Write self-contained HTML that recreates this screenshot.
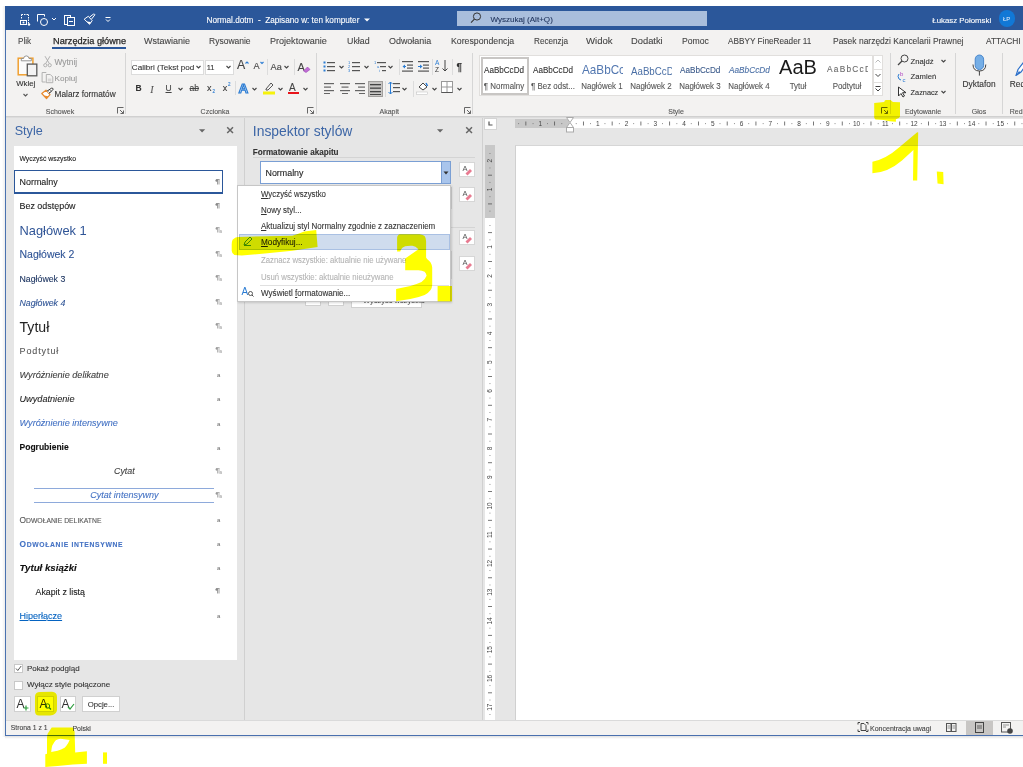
<!DOCTYPE html>
<html><head><meta charset="utf-8"><style>
html,body{margin:0;padding:0;width:1023px;height:767px;overflow:hidden;background:#fff}
body{position:relative;font-family:"Liberation Sans",sans-serif}
.r{position:absolute;display:block}
.t{position:absolute;white-space:nowrap;font-family:"Liberation Sans",sans-serif;-webkit-text-stroke:0.1px currentColor}
.fit{display:inline-block;white-space:nowrap}
</style></head><body>
<div class="r" style="left:0px;top:0px;width:1023px;height:767px;background:#fff"></div>
<div class="r" style="left:5px;top:6px;width:1018px;height:730px;background:#f3f2f1;border-left:1px solid #4a72b0;box-sizing:border-box"></div>
<div class="r" style="left:5px;top:6px;width:1018px;height:24px;background:#2b579a"></div>
<svg class="r" style="left:17px;top:12px;" width="16" height="16" viewBox="0 0 16 16"><path d="M4.5 2.5h7M4.5 2.5v5M11.5 2.5v9" stroke="#fff" stroke-width="1" stroke-dasharray="1.5 1" fill="none"/><rect x="3.5" y="8.5" width="6" height="4" stroke="#fff" fill="none"/><circle cx="6.5" cy="10.5" r="1" fill="#fff"/><circle cx="12" cy="12.5" r="1.2" fill="#fff"/></svg>
<svg class="r" style="left:35px;top:12px;" width="16" height="16" viewBox="0 0 16 16"><path d="M2.5 9.5v-7h7v2" stroke="#fff" fill="none"/><circle cx="9" cy="10" r="3.5" stroke="#fff" fill="none"/></svg>
<svg class="r" style="left:50px;top:15px;" width="8" height="8" viewBox="0 0 8 8"><path d="M2 3l2 2 2-2" stroke="#fff" fill="none"/></svg>
<svg class="r" style="left:62px;top:12px;" width="16" height="16" viewBox="0 0 16 16"><rect x="2.5" y="3.5" width="6" height="9" stroke="#fff" fill="none"/><rect x="5.5" y="5.5" width="7" height="8" stroke="#fff" fill="#2b579a"/><path d="M7 9.5h4" stroke="#fff"/></svg>
<svg class="r" style="left:82px;top:12px;" width="16" height="16" viewBox="0 0 16 16"><path d="M2.2 7.2L6.3 4.3L10.2 8.6L7.6 12.3Z" stroke="#fff" stroke-width="1" fill="none" stroke-linejoin="round"/><path d="M4.5 9.5L7.6 12.3L9 10Z" fill="#fff"/><path d="M7.5 5.2L11.3 2.2Q12.5 1.6 12.9 2.8L9.6 7" stroke="#fff" stroke-width="1" fill="none"/></svg>
<svg class="r" style="left:104px;top:15px;" width="8" height="8" viewBox="0 0 8 8"><path d="M1.5 2.5h5" stroke="#fff"/><path d="M2 4.5l2 2 2-2" stroke="#fff" fill="none"/></svg>
<div class="t" style="left:206.5px;top:15.67px;font-size:8.2px;line-height:10.66px;color:#fff;">Normal.dotm&nbsp; - &nbsp;Zapisano w: ten komputer</div>
<svg class="r" style="left:363px;top:17px;" width="8" height="6" viewBox="0 0 8 6"><path d="M1 1.5h6l-3 3z" fill="#fff"/></svg>
<div class="r" style="left:457px;top:10.8px;width:250px;height:15.6px;background:#a9bedc"></div>
<svg class="r" style="left:469px;top:11px;" width="14" height="14" viewBox="0 0 14 14"><circle cx="8" cy="5.5" r="3.6" stroke="#333" fill="none" stroke-width="1"/><path d="M5.4 8.2L2 11.6" stroke="#333" stroke-width="1.1"/></svg>
<div class="t" style="left:490.4px;top:15.05px;font-size:8.07px;line-height:10.49px;color:#22365e;">Wyszukaj (Alt+Q)</div>
<div class="t" style="left:932.3px;top:15.50px;font-size:7.85px;line-height:10.21px;color:#fff;">Łukasz Połomski</div>
<div class="r" style="left:998.5px;top:10.2px;width:16.5px;height:16.5px;background:#1178d6;border-radius:50%"></div>
<div class="t" style="left:906.70px;width:200px;text-align:center;top:16.10px;font-size:6px;line-height:7.8px;color:#e8f0fa;-webkit-text-stroke:0">ŁP</div>
<div class="t" style="left:18px;top:35.42px;font-size:9.5px;line-height:12.35px;color:#444;;transform:scaleX(0.8494);transform-origin:0 50%">Plik</div>
<div class="t" style="left:52.5px;top:35.42px;font-size:9.5px;line-height:12.35px;color:#262626;-webkit-text-stroke:0.25px currentColor;transform:scaleX(0.9667);transform-origin:0 50%">Narzędzia główne</div>
<div class="t" style="left:143.9px;top:35.42px;font-size:9.5px;line-height:12.35px;color:#444;;transform:scaleX(0.947);transform-origin:0 50%">Wstawianie</div>
<div class="t" style="left:209px;top:35.42px;font-size:9.5px;line-height:12.35px;color:#444;;transform:scaleX(0.8953);transform-origin:0 50%">Rysowanie</div>
<div class="t" style="left:270.2px;top:35.42px;font-size:9.5px;line-height:12.35px;color:#444;;transform:scaleX(0.9519);transform-origin:0 50%">Projektowanie</div>
<div class="t" style="left:346.7px;top:35.42px;font-size:9.5px;line-height:12.35px;color:#444;;transform:scaleX(0.9304);transform-origin:0 50%">Układ</div>
<div class="t" style="left:388.5px;top:35.42px;font-size:9.5px;line-height:12.35px;color:#444;;transform:scaleX(0.9401);transform-origin:0 50%">Odwołania</div>
<div class="t" style="left:450.6px;top:35.42px;font-size:9.5px;line-height:12.35px;color:#444;;transform:scaleX(0.9204);transform-origin:0 50%">Korespondencja</div>
<div class="t" style="left:534px;top:35.42px;font-size:9.5px;line-height:12.35px;color:#444;;transform:scaleX(0.8585);transform-origin:0 50%">Recenzja</div>
<div class="t" style="left:586.2px;top:35.42px;font-size:9.5px;line-height:12.35px;color:#444;;transform:scaleX(1.0079);transform-origin:0 50%">Widok</div>
<div class="t" style="left:631px;top:35.42px;font-size:9.5px;line-height:12.35px;color:#444;;transform:scaleX(0.984);transform-origin:0 50%">Dodatki</div>
<div class="t" style="left:681.6px;top:35.42px;font-size:9.5px;line-height:12.35px;color:#444;;transform:scaleX(0.9099);transform-origin:0 50%">Pomoc</div>
<div class="t" style="left:727.8px;top:35.42px;font-size:9.5px;line-height:12.35px;color:#444;;transform:scaleX(0.8651);transform-origin:0 50%">ABBYY FineReader 11</div>
<div class="t" style="left:833.2px;top:35.42px;font-size:9.5px;line-height:12.35px;color:#444;;transform:scaleX(0.8922);transform-origin:0 50%">Pasek narzędzi Kancelarii Prawnej</div>
<div class="t" style="left:985.8px;top:35.42px;font-size:9.5px;line-height:12.35px;color:#444;;transform:scaleX(0.8844);transform-origin:0 50%">ATTACHI</div>
<div class="r" style="left:52px;top:47px;width:74px;height:2px;background:#2b579a"></div>
<div class="r" style="left:6px;top:50px;width:1017px;height:66px;background:#f3f2f1"></div>
<div class="r" style="left:6px;top:116px;width:1017px;height:1.2px;background:#d0d0d0"></div>
<div class="r" style="left:6px;top:117.2px;width:1017px;height:1px;background:#dcdcdc"></div>
<div class="r" style="left:125px;top:53px;width:1px;height:61px;background:#d6d6d6"></div>
<div class="r" style="left:316px;top:53px;width:1px;height:61px;background:#d6d6d6"></div>
<div class="r" style="left:472px;top:53px;width:1px;height:61px;background:#d6d6d6"></div>
<div class="r" style="left:890px;top:53px;width:1px;height:61px;background:#d6d6d6"></div>
<div class="r" style="left:955px;top:53px;width:1px;height:61px;background:#d6d6d6"></div>
<div class="r" style="left:1002px;top:53px;width:1px;height:61px;background:#d6d6d6"></div>
<svg class="r" style="left:16px;top:54px;" width="24" height="24" viewBox="0 0 24 24"><rect x="2.2" y="4.2" width="14.7" height="16.6" fill="#fbfbfb" stroke="#f0a030" stroke-width="1.5"/><path d="M5.3 6.8v-2.3h2.3q0.2-2.6 2.7-2.6q2.5 0 2.7 2.6h2.3v2.3z" fill="#fff" stroke="#8a8a8a" stroke-width="0.9"/><rect x="11.3" y="10.1" width="9.5" height="11.7" fill="#f3f3f3" stroke="#5a5a5a" stroke-width="1.3"/></svg>
<div class="t" style="left:16.2px;top:79.05px;font-size:7.77px;line-height:10.1px;color:#333;">Wklej</div>
<svg class="r" style="left:22px;top:91.5px;" width="7" height="6" viewBox="0 0 7 6"><path d="M1.5 2l2 2 2-2" stroke="#555" stroke-width="1.1" fill="none"/></svg>
<svg class="r" style="left:42px;top:55px;" width="11" height="13" viewBox="0 0 11 13"><path d="M3 1.2l4.3 7.3M8 1.2L3.7 8.5" stroke="#aaa" fill="none" stroke-width="0.9"/><circle cx="3.3" cy="10.2" r="1.6" stroke="#aaa" fill="none" stroke-width="0.9"/><circle cx="7.7" cy="10.2" r="1.6" stroke="#aaa" fill="none" stroke-width="0.9"/></svg>
<div class="t" style="left:54.6px;top:57.41px;font-size:8.3px;line-height:10.79px;color:#999;">Wytnij</div>
<svg class="r" style="left:41px;top:71px;" width="13" height="13" viewBox="0 0 13 13"><path d="M5.3 1.5h-4.2v9.5h3.5" stroke="#aaa" fill="none" stroke-width="0.9"/><path d="M5.3 3.5h4l2.5 2.5v5.7h-6.5z" stroke="#aaa" fill="#f3f2f1" stroke-width="0.9"/><path d="M6.8 8.2h3.5M6.8 9.8h3.5" stroke="#bbb" stroke-width="0.7"/></svg>
<div class="t" style="left:54.6px;top:73.73px;font-size:8.1px;line-height:10.53px;color:#999;">Kopiuj</div>
<svg class="r" style="left:41px;top:87px;" width="13" height="13" viewBox="0 0 13 13"><path d="M0.8 6.5L5 3.2L9 7.6L5.5 11.6Z" stroke="#e8892c" stroke-width="1.2" fill="#fff" stroke-linejoin="round"/><path d="M3 8.6L5.5 11.6L7.3 9.2Z" fill="#e8892c"/><path d="M6 4.2L10.5 1.2Q12 0.8 12.2 2.2L8.2 6.5" stroke="#333" stroke-width="1" fill="#fff"/><path d="M7.5 4.5l1.5 1.5M9 3.2l1.3 1.3" stroke="#333" stroke-width="0.7"/></svg>
<div class="t" style="left:54.6px;top:90.12px;font-size:8.28px;line-height:10.76px;color:#333;">Malarz formatów</div>
<div class="t" style="left:-40.00px;width:200px;text-align:center;top:106.85px;font-size:7px;line-height:9.1px;color:#555;">Schowek</div>
<svg class="r" style="left:117px;top:107px;" width="8" height="8" viewBox="0 0 8 8"><path d="M0.5 6.5v-6h6" stroke="#666" fill="none"/><path d="M3 3l3.5 3.5M3.5 6.5h3v-3" stroke="#666" fill="none"/></svg>
<div class="r" style="left:130.5px;top:59.5px;width:73px;height:15px;background:#fff;border:1px solid #dcdcdc;box-sizing:border-box"></div>
<div class="t" style="left:131.8px;top:62.53px;font-size:8.1px;line-height:10.53px;color:#333;"><span class="fit" style="width:62.6px">Calibri (Tekst pod</span></div>
<svg class="r" style="left:195px;top:64px;" width="7" height="6" viewBox="0 0 7 6"><path d="M1.5 2l2 2 2-2" stroke="#444" stroke-width="1.1" fill="none"/></svg>
<div class="r" style="left:205px;top:59.5px;width:29px;height:15px;background:#fff;border:1px solid #dcdcdc;box-sizing:border-box"></div>
<div class="t" style="left:206.7px;top:62.92px;font-size:7.5px;line-height:9.75px;color:#333;">11</div>
<svg class="r" style="left:225px;top:64px;" width="7" height="6" viewBox="0 0 7 6"><path d="M1.5 2l2 2 2-2" stroke="#444" stroke-width="1.1" fill="none"/></svg>
<div class="t" style="left:236.9px;top:58.01px;font-size:12.3px;line-height:15.99px;color:#444;">A</div>
<svg class="r" style="left:244.5px;top:60.5px;" width="4" height="4" viewBox="0 0 4 4"><path d="M0.5 2.5l1.5-1.5 1.5 1.5" stroke="#2b7cd3" stroke-width="1.1" fill="none"/></svg>
<div class="t" style="left:253.5px;top:61.22px;font-size:9.2px;line-height:11.96px;color:#444;">A</div>
<svg class="r" style="left:259.8px;top:60.5px;" width="4" height="4" viewBox="0 0 4 4"><path d="M0.5 1l1.5 1.5 1.5-1.5" stroke="#2b7cd3" stroke-width="1.1" fill="none"/></svg>
<div class="r" style="left:266.5px;top:59px;width:1px;height:16px;background:#dcdcdc"></div>
<div class="t" style="left:270.6px;top:61.82px;font-size:9.2px;line-height:11.96px;color:#444;">Aa</div>
<svg class="r" style="left:283px;top:64px;" width="7" height="6" viewBox="0 0 7 6"><path d="M1.5 2l2 2 2-2" stroke="#444" stroke-width="1.1" fill="none"/></svg>
<div class="r" style="left:294px;top:59px;width:1px;height:16px;background:#dcdcdc"></div>
<div class="t" style="left:297.5px;top:60.15px;font-size:11px;line-height:14.3px;color:#444;">A</div>
<svg class="r" style="left:302px;top:66px;" width="9" height="7" viewBox="0 0 9 7"><path d="M1.5 5l4-4 2.5 2.5-4 3z" fill="#c16fd6" stroke="#9b3fb5" stroke-width="0.6"/></svg>
<div class="t" style="left:135.5px;top:83.47px;font-size:8.5px;line-height:11.05px;color:#333;"><b>B</b></div>
<div class="t" style="left:150.3px;top:82.50px;font-size:10px;line-height:13.0px;color:#555;font-family:Liberation Serif"><i>I</i></div>
<div class="t" style="left:165.5px;top:83.27px;font-size:8.5px;line-height:11.05px;color:#444;"><u>U</u></div>
<svg class="r" style="left:177px;top:86px;" width="7" height="6" viewBox="0 0 7 6"><path d="M1.5 2l2 2 2-2" stroke="#444" stroke-width="1.1" fill="none"/></svg>
<div class="t" style="left:189.5px;top:83.27px;font-size:8.5px;line-height:11.05px;color:#444;"><s>ab</s></div>
<div class="t" style="left:207px;top:83.45px;font-size:9px;line-height:11.7px;color:#333;">x</div>
<div class="t" style="left:212.5px;top:89.38px;font-size:4.5px;line-height:5.85px;color:#2b7cd3;">2</div>
<div class="t" style="left:222.8px;top:83.45px;font-size:9px;line-height:11.7px;color:#333;">x</div>
<div class="t" style="left:228px;top:81.88px;font-size:4.5px;line-height:5.85px;color:#2b7cd3;">2</div>
<div class="r" style="left:234.5px;top:81px;width:1px;height:14px;background:#dcdcdc"></div>
<div class="t" style="left:238.4px;top:80.02px;font-size:13.5px;line-height:17.55px;color:#d6e6f8;-webkit-text-stroke:1.1px #2b7cd3"><b>A</b></div>
<svg class="r" style="left:251px;top:86px;" width="7" height="6" viewBox="0 0 7 6"><path d="M1.5 2l2 2 2-2" stroke="#444" stroke-width="1.1" fill="none"/></svg>
<svg class="r" style="left:262px;top:80px;" width="14" height="15" viewBox="0 0 14 15"><path d="M4 9l5-6 2 2-5 5h-2z" stroke="#555" fill="none"/><rect x="1" y="11.5" width="12" height="3" fill="#f6f20b"/></svg>
<svg class="r" style="left:277px;top:86px;" width="7" height="6" viewBox="0 0 7 6"><path d="M1.5 2l2 2 2-2" stroke="#444" stroke-width="1.1" fill="none"/></svg>
<div class="t" style="left:289px;top:80.80px;font-size:10px;line-height:13.0px;color:#444;">A</div>
<div class="r" style="left:288px;top:91.5px;width:11px;height:2.5px;background:#e8141a"></div>
<svg class="r" style="left:302px;top:86px;" width="7" height="6" viewBox="0 0 7 6"><path d="M1.5 2l2 2 2-2" stroke="#444" stroke-width="1.1" fill="none"/></svg>
<div class="t" style="left:115.00px;width:200px;text-align:center;top:106.85px;font-size:7px;line-height:9.1px;color:#555;">Czcionka</div>
<svg class="r" style="left:307px;top:107px;" width="8" height="8" viewBox="0 0 8 8"><path d="M0.5 6.5v-6h6" stroke="#666" fill="none"/><path d="M3 3l3.5 3.5M3.5 6.5h3v-3" stroke="#666" fill="none"/></svg>
<svg class="r" style="left:323px;top:60px;" width="12" height="12" viewBox="0 0 12 12"><rect x="0.5" y="1.5" width="2" height="2" fill="#2b7cd3"/><rect x="0.5" y="5.5" width="2" height="2" fill="#2b7cd3"/><rect x="0.5" y="9.5" width="2" height="2" fill="#2b7cd3"/><rect x="4" y="2" width="8" height="1.2" fill="#555"/><rect x="4" y="6" width="8" height="1.2" fill="#555"/><rect x="4" y="10" width="8" height="1.2" fill="#555"/></svg>
<svg class="r" style="left:338px;top:64px;" width="7" height="6" viewBox="0 0 7 6"><path d="M1.5 2l2 2 2-2" stroke="#444" stroke-width="1.1" fill="none"/></svg>
<svg class="r" style="left:348px;top:60px;" width="12" height="12" viewBox="0 0 12 12"><text x="0" y="4" font-size="4" fill="#2b7cd3" font-family="Liberation Sans">1</text><text x="0" y="8" font-size="4" fill="#2b7cd3" font-family="Liberation Sans">2</text><text x="0" y="12" font-size="4" fill="#2b7cd3" font-family="Liberation Sans">3</text><rect x="4" y="2" width="8" height="1.2" fill="#555"/><rect x="4" y="6" width="8" height="1.2" fill="#555"/><rect x="4" y="10" width="8" height="1.2" fill="#555"/></svg>
<svg class="r" style="left:363px;top:64px;" width="7" height="6" viewBox="0 0 7 6"><path d="M1.5 2l2 2 2-2" stroke="#444" stroke-width="1.1" fill="none"/></svg>
<svg class="r" style="left:374px;top:60px;" width="12" height="12" viewBox="0 0 12 12"><text x="0" y="4" font-size="4" fill="#2b7cd3" font-family="Liberation Sans">1</text><text x="3" y="8" font-size="4" fill="#2b7cd3" font-family="Liberation Sans">a</text><text x="5" y="12" font-size="4" fill="#2b7cd3" font-family="Liberation Sans">i</text><rect x="3" y="2" width="9" height="1.2" fill="#555"/><rect x="6" y="6" width="6" height="1.2" fill="#555"/><rect x="8" y="10" width="4" height="1.2" fill="#555"/></svg>
<svg class="r" style="left:387px;top:64px;" width="7" height="6" viewBox="0 0 7 6"><path d="M1.5 2l2 2 2-2" stroke="#444" stroke-width="1.1" fill="none"/></svg>
<div class="r" style="left:398.5px;top:59px;width:1px;height:16px;background:#dcdcdc"></div>
<svg class="r" style="left:402px;top:60px;" width="11" height="12" viewBox="0 0 11 12"><rect x="0" y="1" width="11" height="1.2" fill="#555"/><rect x="5" y="4.5" width="6" height="1.2" fill="#555"/><rect x="5" y="7.5" width="6" height="1.2" fill="#555"/><rect x="0" y="10.5" width="11" height="1.2" fill="#555"/><path d="M0.5 6.5l2.5-2v4z" fill="#2b7cd3"/><rect x="1" y="6" width="3" height="1" fill="#2b7cd3"/></svg>
<svg class="r" style="left:418px;top:60px;" width="11" height="12" viewBox="0 0 11 12"><rect x="0" y="1" width="11" height="1.2" fill="#555"/><rect x="5" y="4.5" width="6" height="1.2" fill="#555"/><rect x="5" y="7.5" width="6" height="1.2" fill="#555"/><rect x="0" y="10.5" width="11" height="1.2" fill="#555"/><path d="M4.5 6.5l-2.5-2v4z" fill="#2b7cd3"/><rect x="0" y="6" width="3" height="1" fill="#2b7cd3"/></svg>
<div class="r" style="left:432px;top:59px;width:1px;height:16px;background:#dcdcdc"></div>
<svg class="r" style="left:435px;top:59px;" width="14" height="14" viewBox="0 0 14 14"><text x="0" y="6" font-size="6.5" fill="#2b7cd3" font-family="Liberation Sans">A</text><text x="0" y="13" font-size="6.5" fill="#333" font-family="Liberation Sans">Z</text><path d="M10 1v11M7.5 9.5l2.5 2.5 2.5-2.5" stroke="#444" fill="none"/></svg>
<div class="r" style="left:451.5px;top:59px;width:1px;height:16px;background:#dcdcdc"></div>
<div class="t" style="left:456.5px;top:60.80px;font-size:10px;line-height:13.0px;color:#333;font-weight:bold">¶</div>
<svg class="r" style="left:324px;top:82px;" width="11" height="12" viewBox="0 0 11 12"><rect x="0" y="1" width="10" height="1.2" fill="#666"/><rect x="0" y="4.5" width="7" height="1.2" fill="#666"/><rect x="0" y="8" width="10" height="1.2" fill="#666"/><rect x="0" y="11" width="6" height="1.2" fill="#666"/></svg>
<svg class="r" style="left:340px;top:82px;" width="11" height="12" viewBox="0 0 11 12"><rect x="0" y="1" width="10" height="1.2" fill="#666"/><rect x="1.5" y="4.5" width="7" height="1.2" fill="#666"/><rect x="0" y="8" width="10" height="1.2" fill="#666"/><rect x="2" y="11" width="6" height="1.2" fill="#666"/></svg>
<svg class="r" style="left:355px;top:82px;" width="11" height="12" viewBox="0 0 11 12"><rect x="0" y="1" width="10" height="1.2" fill="#666"/><rect x="3" y="4.5" width="7" height="1.2" fill="#666"/><rect x="0" y="8" width="10" height="1.2" fill="#666"/><rect x="4" y="11" width="6" height="1.2" fill="#666"/></svg>
<div class="r" style="left:368px;top:81px;width:15px;height:16px;background:#c8c6c4;border:1px solid #a19f9d;box-sizing:border-box"></div>
<svg class="r" style="left:370px;top:83px;" width="11" height="12" viewBox="0 0 11 12"><rect x="0" y="1" width="11" height="1.3" fill="#444"/><rect x="0" y="4.5" width="11" height="1.3" fill="#444"/><rect x="0" y="8" width="11" height="1.3" fill="#444"/><rect x="0" y="11" width="11" height="1.3" fill="#444"/></svg>
<div class="r" style="left:384.5px;top:81px;width:1px;height:16px;background:#dcdcdc"></div>
<svg class="r" style="left:388px;top:81px;" width="13" height="14" viewBox="0 0 13 14"><path d="M2.5 1v12M0.5 3l2-2 2 2M0.5 11l2 2 2-2" stroke="#2b7cd3" fill="none"/><rect x="5" y="2" width="7" height="1.2" fill="#555"/><rect x="5" y="6" width="7" height="1.2" fill="#555"/><rect x="5" y="10" width="7" height="1.2" fill="#555"/></svg>
<svg class="r" style="left:401px;top:86px;" width="7" height="6" viewBox="0 0 7 6"><path d="M1.5 2l2 2 2-2" stroke="#444" stroke-width="1.1" fill="none"/></svg>
<div class="r" style="left:412.5px;top:81px;width:1px;height:16px;background:#dcdcdc"></div>
<svg class="r" style="left:416px;top:80px;" width="13" height="15" viewBox="0 0 13 15"><path d="M3 7l4-4 4 4-4 3z" stroke="#444" fill="#fff"/><path d="M10 3l1.5 3" stroke="#2b7cd3" stroke-width="1.5"/><rect x="0.5" y="12" width="11" height="2.5" fill="#fff" stroke="#bbb" stroke-width="0.5"/></svg>
<svg class="r" style="left:431px;top:86px;" width="7" height="6" viewBox="0 0 7 6"><path d="M1.5 2l2 2 2-2" stroke="#444" stroke-width="1.1" fill="none"/></svg>
<svg class="r" style="left:441px;top:81px;" width="12" height="13" viewBox="0 0 12 13"><rect x="0.5" y="0.5" width="11" height="11" stroke="#999" fill="#fff"/><path d="M6 0.5v11M0.5 6h11" stroke="#999"/><path d="M0.5 11.5h11" stroke="#555"/></svg>
<svg class="r" style="left:456px;top:86px;" width="7" height="6" viewBox="0 0 7 6"><path d="M1.5 2l2 2 2-2" stroke="#444" stroke-width="1.1" fill="none"/></svg>
<div class="t" style="left:289.30px;width:200px;text-align:center;top:106.85px;font-size:7px;line-height:9.1px;color:#555;">Akapit</div>
<svg class="r" style="left:464px;top:107px;" width="8" height="8" viewBox="0 0 8 8"><path d="M0.5 6.5v-6h6" stroke="#666" fill="none"/><path d="M3 3l3.5 3.5M3.5 6.5h3v-3" stroke="#666" fill="none"/></svg>
<div class="r" style="left:479px;top:54.5px;width:394px;height:41px;background:#fff;border:1px solid #e1dfdd;box-sizing:border-box"></div>
<div class="r" style="left:480.5px;top:56.5px;width:48px;height:38px;border:2px solid #c8c6c4;box-sizing:border-box"></div>
<div class="r" style="left:482px;top:56px;width:44px;height:26px;overflow:hidden"><div class="t" style="left:2px;top:8.61px;font-size:8.9px;line-height:11.57px;color:#333;transform:scaleX(0.91);transform-origin:0 50%">AaBbCcDd</div></div>
<div class="t" style="left:474.00px;width:60px;text-align:center;top:81.18px;font-size:8.8px;line-height:11.44px;color:#555;;transform:scaleX(0.9);transform-origin:50% 50%">¶ Normalny</div>
<div class="r" style="left:531px;top:56px;width:44px;height:26px;overflow:hidden"><div class="t" style="left:2px;top:8.61px;font-size:8.9px;line-height:11.57px;color:#333;transform:scaleX(0.91);transform-origin:0 50%">AaBbCcDd</div></div>
<div class="t" style="left:523.00px;width:60px;text-align:center;top:81.18px;font-size:8.8px;line-height:11.44px;color:#555;;transform:scaleX(0.9);transform-origin:50% 50%">¶ Bez odst...</div>
<div class="r" style="left:580px;top:56px;width:43px;height:26px;overflow:hidden"><div class="t" style="left:2px;top:5.87px;font-size:12.6px;line-height:16.38px;color:#5277b0;-webkit-text-stroke:0;transform:scaleX(0.93);transform-origin:0 50%">AaBbCcDd</div></div>
<div class="t" style="left:572.00px;width:60px;text-align:center;top:81.18px;font-size:8.8px;line-height:11.44px;color:#555;;transform:scaleX(0.9);transform-origin:50% 50%">Nagłówek 1</div>
<div class="r" style="left:629px;top:56px;width:43px;height:26px;overflow:hidden"><div class="t" style="left:2px;top:7.69px;font-size:10.8px;line-height:14.04px;color:#4a6fa5;-webkit-text-stroke:0;transform:scaleX(0.9);transform-origin:0 50%">AaBbCcDd</div></div>
<div class="t" style="left:621.00px;width:60px;text-align:center;top:81.18px;font-size:8.8px;line-height:11.44px;color:#555;;transform:scaleX(0.9);transform-origin:50% 50%">Nagłówek 2</div>
<div class="r" style="left:678px;top:56px;width:43px;height:26px;overflow:hidden"><div class="t" style="left:2px;top:8.61px;font-size:8.9px;line-height:11.57px;color:#3b5a8a;transform:scaleX(0.92);transform-origin:0 50%">AaBbCcDd</div></div>
<div class="t" style="left:670.00px;width:60px;text-align:center;top:81.18px;font-size:8.8px;line-height:11.44px;color:#555;;transform:scaleX(0.9);transform-origin:50% 50%">Nagłówek 3</div>
<div class="r" style="left:727px;top:56px;width:43px;height:26px;overflow:hidden"><div class="t" style="left:2px;top:8.61px;font-size:8.9px;line-height:11.57px;color:#4a6fa5;font-style:italic;transform:scaleX(0.93);transform-origin:0 50%">AaBbCcDd</div></div>
<div class="t" style="left:719.00px;width:60px;text-align:center;top:81.18px;font-size:8.8px;line-height:11.44px;color:#555;;transform:scaleX(0.9);transform-origin:50% 50%">Nagłówek 4</div>
<div class="r" style="left:776px;top:56px;width:44px;height:26px;overflow:hidden"><div class="t" style="left:0;width:44px;text-align:center;top:-1.60px;font-size:20px;line-height:26.00px;color:#1a1a1a;-webkit-text-stroke:0">AaB</div></div>
<div class="t" style="left:768.00px;width:60px;text-align:center;top:81.18px;font-size:8.8px;line-height:11.44px;color:#555;;transform:scaleX(0.9);transform-origin:50% 50%">Tytuł</div>
<div class="r" style="left:825px;top:56px;width:43px;height:26px;overflow:hidden"><div class="t" style="left:2px;top:9.22px;font-size:8.3px;line-height:10.79px;color:#6a6a6a;letter-spacing:1.25px;margin-top:-1.3px">AaBbCcD</div></div>
<div class="t" style="left:817.00px;width:60px;text-align:center;top:81.18px;font-size:8.8px;line-height:11.44px;color:#555;;transform:scaleX(0.9);transform-origin:50% 50%">Podtytuł</div>
<div class="r" style="left:873px;top:54.5px;width:10px;height:41px;background:#fff;border:1px solid #e1dfdd;box-sizing:border-box"></div>
<div class="r" style="left:873px;top:69px;width:10px;height:1px;background:#e1dfdd"></div>
<div class="r" style="left:873px;top:82px;width:10px;height:1px;background:#e1dfdd"></div>
<svg class="r" style="left:875px;top:59px;" width="6" height="5" viewBox="0 0 6 5"><path d="M0.5 3.5l2.5-2.5 2.5 2.5" stroke="#bbb" fill="none"/></svg>
<svg class="r" style="left:875px;top:73px;" width="6" height="5" viewBox="0 0 6 5"><path d="M0.5 1l2.5 2.5 2.5-2.5" stroke="#444" fill="none"/></svg>
<svg class="r" style="left:875px;top:86px;" width="6" height="6" viewBox="0 0 6 6"><path d="M0.5 0.5h5M0.5 2.5l2.5 2.5 2.5-2.5" stroke="#444" fill="none"/></svg>
<div class="t" style="left:576.00px;width:200px;text-align:center;top:106.85px;font-size:7px;line-height:9.1px;color:#555;">Style</div>
<svg class="r" style="left:881px;top:107px;" width="8" height="8" viewBox="0 0 8 8"><path d="M0.5 6.5v-6h6" stroke="#666" fill="none"/><path d="M3 3l3.5 3.5M3.5 6.5h3v-3" stroke="#666" fill="none"/></svg>
<svg class="r" style="left:897px;top:54px;" width="12" height="12" viewBox="0 0 12 12"><circle cx="7.5" cy="4.5" r="3.5" stroke="#444" fill="none"/><path d="M5 7L1 11" stroke="#444" stroke-width="1.2"/></svg>
<div class="t" style="left:910.6px;top:56.62px;font-size:7.66px;line-height:9.96px;color:#333;">Znajdź</div>
<svg class="r" style="left:940px;top:58px;" width="7" height="6" viewBox="0 0 7 6"><path d="M1.5 2l2 2 2-2" stroke="#444" stroke-width="1.1" fill="none"/></svg>
<svg class="r" style="left:896px;top:70px;" width="12" height="12" viewBox="0 0 12 12"><text x="4" y="6" font-size="6" fill="#b146c2" font-family="Liberation Sans">b</text><text x="6.5" y="11.5" font-size="6" fill="#2b7cd3" font-family="Liberation Sans">c</text><path d="M3 4q-2 2 0 5l2 1" stroke="#2b7cd3" fill="none"/></svg>
<div class="t" style="left:910.6px;top:72.09px;font-size:7.7px;line-height:10.01px;color:#333;">Zamień</div>
<svg class="r" style="left:897px;top:86px;" width="10" height="12" viewBox="0 0 10 12"><path d="M1.5 1v9l2.5-2.5 2 3.5 1.5-1-2-3.3h3.5z" stroke="#333" fill="#fff"/></svg>
<div class="t" style="left:910.6px;top:87.83px;font-size:7.33px;line-height:9.53px;color:#333;">Zaznacz</div>
<svg class="r" style="left:940px;top:89px;" width="7" height="6" viewBox="0 0 7 6"><path d="M1.5 2l2 2 2-2" stroke="#444" stroke-width="1.1" fill="none"/></svg>
<div class="t" style="left:823.00px;width:200px;text-align:center;top:106.85px;font-size:7px;line-height:9.1px;color:#555;">Edytowanie</div>
<svg class="r" style="left:970px;top:54px;" width="18" height="22" viewBox="0 0 18 22"><rect x="5.2" y="1" width="8.4" height="14.6" rx="4.2" fill="#75aee6" stroke="#3f80c8" stroke-width="0.9"/><path d="M3 10.5q0 6.5 6.4 6.5q6.4 0 6.4-6.5M9.4 17v4.6" stroke="#444" stroke-width="1" fill="none"/></svg>
<div class="t" style="left:962.6px;top:78.86px;font-size:8.36px;line-height:10.87px;color:#333;">Dyktafon</div>
<div class="t" style="left:879.00px;width:200px;text-align:center;top:106.85px;font-size:7px;line-height:9.1px;color:#555;">Głos</div>
<svg class="r" style="left:1014px;top:57px;" width="12" height="19" viewBox="0 0 12 19"><path d="M12 2L4 12.5l-2 6 5-3.5 6-8" stroke="#2b6fc9" stroke-width="1.2" fill="#fff"/><path d="M5 14l-2.5 4 4-2.5z" fill="#2b6fc9"/></svg>
<div class="t" style="left:1009.8px;top:78.86px;font-size:8.36px;line-height:10.87px;color:#333;">Red</div>
<div class="t" style="left:1009.8px;top:106.85px;font-size:7px;line-height:9.1px;color:#555;">Red</div>
<div class="r" style="left:6px;top:118px;width:1017px;height:602px;background:#e6e6e6"></div>
<div class="t" style="left:14.7px;top:123.01px;font-size:12.6px;line-height:16.38px;color:#3d66a6;-webkit-text-stroke:0">Style</div>
<svg class="r" style="left:199px;top:128.8px;" width="7" height="4" viewBox="0 0 7 4"><path d="M0 0.2h6.2l-3.1 3.2z" fill="#666"/></svg>
<svg class="r" style="left:226px;top:126px;" width="8" height="8" viewBox="0 0 8 8"><path d="M1.2 1.2l5.8 5.8M7 1.2l-5.8 5.8" stroke="#666" stroke-width="1.5"/></svg>
<div class="r" style="left:14px;top:146px;width:223px;height:514px;background:#fff"></div>
<div class="r" style="left:243.5px;top:118px;width:1px;height:602px;background:#d0d0d0"></div>
<div class="t" style="left:19.4px;top:155.34px;font-size:6.87px;line-height:8.93px;color:#222;">Wyczyść wszystko</div>
<div class="r" style="left:14px;top:170px;width:209px;height:24px;border:2px solid #2b579a;box-sizing:border-box;border-width:1.5px 1.5px 2px 1.5px"></div>
<div class="t" style="left:19.5px;top:177.19px;font-size:8.95px;line-height:11.63px;color:#222;">Normalny</div>
<div class="r" style="left:215px;top:178.70px;width:8px;height:7px;line-height:0"><svg width="5" height="6" viewBox="0 0 5 6"><path d="M1 0.5h3.5M2.5 0.5v5M4 0.5v5" stroke="#888" stroke-width="0.8" fill="none"/><circle cx="1.6" cy="1.6" r="1.2" fill="#888"/></svg></div>
<div class="t" style="left:19.5px;top:201.27px;font-size:8.93px;line-height:11.61px;color:#222;">Bez odstępów</div>
<div class="r" style="left:215px;top:202.78px;width:8px;height:7px;line-height:0"><svg width="5" height="6" viewBox="0 0 5 6"><path d="M1 0.5h3.5M2.5 0.5v5M4 0.5v5" stroke="#888" stroke-width="0.8" fill="none"/><circle cx="1.6" cy="1.6" r="1.2" fill="#888"/></svg></div>
<div class="t" style="left:19.5px;top:222.80px;font-size:12.86px;line-height:16.72px;color:#2f5496;;-webkit-text-stroke:0">Nagłówek 1</div>
<div class="r" style="left:215px;top:226.86px;width:8px;height:7px;line-height:0"><svg width="7" height="6" viewBox="0 0 7 6"><path d="M1 0.5h3.5M2.5 0.5v5M4 0.5v5" stroke="#999" stroke-width="0.7" fill="none"/><circle cx="1.6" cy="1.6" r="1.1" fill="#999"/><text x="4.4" y="5.5" font-size="4.5" fill="#999" font-family="Liberation Sans">a</text></svg></div>
<div class="t" style="left:19.5px;top:248.42px;font-size:10.5px;line-height:13.65px;color:#2f5496;">Nagłówek 2</div>
<div class="r" style="left:215px;top:250.94px;width:8px;height:7px;line-height:0"><svg width="7" height="6" viewBox="0 0 7 6"><path d="M1 0.5h3.5M2.5 0.5v5M4 0.5v5" stroke="#999" stroke-width="0.7" fill="none"/><circle cx="1.6" cy="1.6" r="1.1" fill="#999"/><text x="4.4" y="5.5" font-size="4.5" fill="#999" font-family="Liberation Sans">a</text></svg></div>
<div class="t" style="left:19.5px;top:273.62px;font-size:8.78px;line-height:11.41px;color:#1f3763;">Nagłówek 3</div>
<div class="r" style="left:215px;top:275.02px;width:8px;height:7px;line-height:0"><svg width="7" height="6" viewBox="0 0 7 6"><path d="M1 0.5h3.5M2.5 0.5v5M4 0.5v5" stroke="#999" stroke-width="0.7" fill="none"/><circle cx="1.6" cy="1.6" r="1.1" fill="#999"/><text x="4.4" y="5.5" font-size="4.5" fill="#999" font-family="Liberation Sans">a</text></svg></div>
<div class="t" style="left:19.5px;top:297.69px;font-size:8.78px;line-height:11.41px;color:#2f5496;font-style:italic">Nagłówek 4</div>
<div class="r" style="left:215px;top:299.10px;width:8px;height:7px;line-height:0"><svg width="7" height="6" viewBox="0 0 7 6"><path d="M1 0.5h3.5M2.5 0.5v5M4 0.5v5" stroke="#999" stroke-width="0.7" fill="none"/><circle cx="1.6" cy="1.6" r="1.1" fill="#999"/><text x="4.4" y="5.5" font-size="4.5" fill="#999" font-family="Liberation Sans">a</text></svg></div>
<div class="t" style="left:19.5px;top:318.31px;font-size:14.1px;line-height:18.33px;color:#222;;-webkit-text-stroke:0">Tytuł</div>
<div class="r" style="left:215px;top:323.18px;width:8px;height:7px;line-height:0"><svg width="7" height="6" viewBox="0 0 7 6"><path d="M1 0.5h3.5M2.5 0.5v5M4 0.5v5" stroke="#999" stroke-width="0.7" fill="none"/><circle cx="1.6" cy="1.6" r="1.1" fill="#999"/><text x="4.4" y="5.5" font-size="4.5" fill="#999" font-family="Liberation Sans">a</text></svg></div>
<div class="t" style="left:19.5px;top:345.71px;font-size:9.0px;line-height:11.7px;color:#5a5a5a;letter-spacing:0.9px">Podtytuł</div>
<div class="r" style="left:215px;top:347.26px;width:8px;height:7px;line-height:0"><svg width="7" height="6" viewBox="0 0 7 6"><path d="M1 0.5h3.5M2.5 0.5v5M4 0.5v5" stroke="#999" stroke-width="0.7" fill="none"/><circle cx="1.6" cy="1.6" r="1.1" fill="#999"/><text x="4.4" y="5.5" font-size="4.5" fill="#999" font-family="Liberation Sans">a</text></svg></div>
<div class="t" style="left:19.5px;top:369.69px;font-size:9.15px;line-height:11.9px;color:#404040;font-style:italic">Wyróżnienie delikatne</div>
<div class="r" style="left:215px;top:371.34px;width:8px;height:7px;line-height:0"><svg width="6" height="6" viewBox="0 0 6 6"><text x="2" y="5.5" font-size="6" fill="#666" font-family="Liberation Sans">a</text></svg></div>
<div class="t" style="left:19.5px;top:393.76px;font-size:9.16px;line-height:11.91px;color:#262626;font-style:italic">Uwydatnienie</div>
<div class="r" style="left:215px;top:395.42px;width:8px;height:7px;line-height:0"><svg width="6" height="6" viewBox="0 0 6 6"><text x="2" y="5.5" font-size="6" fill="#666" font-family="Liberation Sans">a</text></svg></div>
<div class="t" style="left:19.5px;top:417.86px;font-size:9.14px;line-height:11.88px;color:#4472c4;font-style:italic">Wyróżnienie intensywne</div>
<div class="r" style="left:215px;top:419.50px;width:8px;height:7px;line-height:0"><svg width="6" height="6" viewBox="0 0 6 6"><text x="2" y="5.5" font-size="6" fill="#666" font-family="Liberation Sans">a</text></svg></div>
<div class="t" style="left:19.5px;top:442.33px;font-size:8.53px;line-height:11.09px;color:#111;font-weight:bold">Pogrubienie</div>
<div class="r" style="left:215px;top:443.58px;width:8px;height:7px;line-height:0"><svg width="6" height="6" viewBox="0 0 6 6"><text x="2" y="5.5" font-size="6" fill="#666" font-family="Liberation Sans">a</text></svg></div>
<div class="t" style="left:49.40px;width:150px;text-align:center;top:466.22px;font-size:8.83px;line-height:11.48px;color:#404040;font-style:italic">Cytat</div>
<div class="r" style="left:215px;top:467.66px;width:8px;height:7px;line-height:0"><svg width="7" height="6" viewBox="0 0 7 6"><path d="M1 0.5h3.5M2.5 0.5v5M4 0.5v5" stroke="#999" stroke-width="0.7" fill="none"/><circle cx="1.6" cy="1.6" r="1.1" fill="#999"/><text x="4.4" y="5.5" font-size="4.5" fill="#999" font-family="Liberation Sans">a</text></svg></div>
<div class="r" style="left:34px;top:487.73999999999995px;width:180px;height:1px;background:#8eaadb"></div>
<div class="r" style="left:34px;top:501.73999999999995px;width:180px;height:1px;background:#8eaadb"></div>
<div class="t" style="left:49.40px;width:150px;text-align:center;top:490.17px;font-size:9.02px;line-height:11.73px;color:#4472c4;font-style:italic">Cytat intensywny</div>
<div class="r" style="left:215px;top:491.74px;width:8px;height:7px;line-height:0"><svg width="7" height="6" viewBox="0 0 7 6"><path d="M1 0.5h3.5M2.5 0.5v5M4 0.5v5" stroke="#999" stroke-width="0.7" fill="none"/><circle cx="1.6" cy="1.6" r="1.1" fill="#999"/><text x="4.4" y="5.5" font-size="4.5" fill="#999" font-family="Liberation Sans">a</text></svg></div>
<div class="t" style="left:19.5px;top:514.66px;font-size:8.4px;line-height:10.92px;color:#555;">O<span style="font-size:0.81em">DWOŁANIE DELIKATNE</span></div>
<div class="r" style="left:215px;top:515.82px;width:8px;height:7px;line-height:0"><svg width="6" height="6" viewBox="0 0 6 6"><text x="2" y="5.5" font-size="6" fill="#666" font-family="Liberation Sans">a</text></svg></div>
<div class="t" style="left:19.5px;top:538.74px;font-size:8.4px;line-height:10.92px;color:#4472c4;font-weight:bold;letter-spacing:0.65px">O<span style="font-size:0.81em">DWOŁANIE INTENSYWNE</span></div>
<div class="r" style="left:215px;top:539.90px;width:8px;height:7px;line-height:0"><svg width="6" height="6" viewBox="0 0 6 6"><text x="2" y="5.5" font-size="6" fill="#666" font-family="Liberation Sans">a</text></svg></div>
<div class="t" style="left:19.5px;top:561.98px;font-size:9.7px;line-height:12.61px;color:#111;font-style:italic;font-weight:bold">Tytuł książki</div>
<div class="r" style="left:215px;top:563.98px;width:8px;height:7px;line-height:0"><svg width="6" height="6" viewBox="0 0 6 6"><text x="2" y="5.5" font-size="6" fill="#666" font-family="Liberation Sans">a</text></svg></div>
<div class="t" style="left:35.5px;top:586.62px;font-size:8.82px;line-height:11.47px;color:#222;">Akapit z listą</div>
<div class="r" style="left:215px;top:588.06px;width:8px;height:7px;line-height:0"><svg width="5" height="6" viewBox="0 0 5 6"><path d="M1 0.5h3.5M2.5 0.5v5M4 0.5v5" stroke="#888" stroke-width="0.8" fill="none"/><circle cx="1.6" cy="1.6" r="1.2" fill="#888"/></svg></div>
<div class="t" style="left:19.5px;top:610.57px;font-size:9.02px;line-height:11.73px;color:#0563c1;text-decoration:underline">Hiperłącze</div>
<div class="r" style="left:215px;top:612.14px;width:8px;height:7px;line-height:0"><svg width="6" height="6" viewBox="0 0 6 6"><text x="2" y="5.5" font-size="6" fill="#666" font-family="Liberation Sans">a</text></svg></div>
<div class="r" style="left:14px;top:664px;width:9px;height:9px;background:#fff;border:1px solid #c8c8c8;box-sizing:border-box"></div>
<svg class="r" style="left:15px;top:665px;" width="7" height="7" viewBox="0 0 7 7"><path d="M1 3.5l1.8 2 3.4-4.5" stroke="#444" fill="none" stroke-width="0.9"/></svg>
<div class="t" style="left:26.9px;top:664.01px;font-size:7.98px;line-height:10.37px;color:#333;">Pokaż podgląd</div>
<div class="r" style="left:14px;top:680.5px;width:9px;height:9px;background:#fff;border:1px solid #c8c8c8;box-sizing:border-box"></div>
<div class="t" style="left:26.9px;top:680.08px;font-size:8.03px;line-height:10.44px;color:#333;">Wyłącz style połączone</div>
<div class="r" style="left:14px;top:695.5px;width:16.5px;height:16.5px;background:#fff;border:1px solid #d0d0d0;box-sizing:border-box"></div>
<div class="r" style="left:37px;top:695.5px;width:16.5px;height:16.5px;background:#fff;border:1px solid #d0d0d0;box-sizing:border-box"></div>
<div class="r" style="left:59.5px;top:695.5px;width:16.5px;height:16.5px;background:#fff;border:1px solid #d0d0d0;box-sizing:border-box"></div>
<svg class="r" style="left:15px;top:696px;" width="15" height="15" viewBox="0 0 15 15"><text x="1.5" y="12" font-size="12" fill="#333" font-family="Liberation Sans">A</text><path d="M11 9.5v5M8.5 12h5" stroke="#2e9e3e" stroke-width="1.2"/></svg>
<svg class="r" style="left:38px;top:696px;" width="15" height="15" viewBox="0 0 15 15"><text x="1.5" y="12" font-size="12" fill="#333" font-family="Liberation Sans">A</text><circle cx="9.5" cy="10" r="2.2" stroke="#2e7d32" fill="none" stroke-width="1"/><path d="M11 11.5l2 2" stroke="#2e7d32" stroke-width="1.2"/></svg>
<svg class="r" style="left:60px;top:696px;" width="16" height="15" viewBox="0 0 16 15"><text x="1.5" y="12" font-size="12" fill="#333" font-family="Liberation Sans">A</text><path d="M8 11l2 2 4-5" stroke="#2e9e3e" stroke-width="1.2" fill="none"/></svg>
<div class="r" style="left:82.3px;top:695.5px;width:38.2px;height:16.5px;background:#fff;border:1px solid #d0d0d0;box-sizing:border-box"></div>
<div class="t" style="left:87.7px;top:699.56px;font-size:7.75px;line-height:10.08px;color:#333;">Opcje...</div>
<div class="t" style="left:252.8px;top:121.96px;font-size:13.9px;line-height:18.07px;color:#3d66a6;-webkit-text-stroke:0">Inspektor stylów</div>
<svg class="r" style="left:437.2px;top:128.8px;" width="7" height="4" viewBox="0 0 7 4"><path d="M0 0.2h6.2l-3.1 3.2z" fill="#666"/></svg>
<svg class="r" style="left:464.5px;top:126px;" width="8" height="8" viewBox="0 0 8 8"><path d="M1.2 1.2l5.8 5.8M7 1.2l-5.8 5.8" stroke="#666" stroke-width="1.5"/></svg>
<div class="t" style="left:252.8px;top:148.10px;font-size:8.15px;line-height:10.6px;color:#333;font-weight:bold">Formatowanie akapitu</div>
<div class="r" style="left:252.8px;top:157px;width:222px;height:1px;background:#d4d4d4"></div>
<div class="r" style="left:260.4px;top:161px;width:191px;height:22.5px;background:#fff;border:1px solid #7a9fd4;box-sizing:border-box"></div>
<div class="r" style="left:441.3px;top:162px;width:9.2px;height:20.5px;background:#a9c5ec;border-left:1px solid #7a9fd4;box-sizing:border-box"></div>
<svg class="r" style="left:443px;top:171px;" width="6" height="4" viewBox="0 0 6 4"><path d="M0.5 0.5h5l-2.5 3z" fill="#333"/></svg>
<div class="t" style="left:265.5px;top:168.12px;font-size:8.9px;line-height:11.57px;color:#222;">Normalny</div>
<div class="r" style="left:459.4px;top:162px;width:15.3px;height:15px;background:#fff;border:1px solid #d6d6d6;box-sizing:border-box"></div>
<svg class="r" style="left:459.4px;top:162px;" width="16" height="15" viewBox="0 0 16 15"><text x="3.5" y="8.5" font-size="7.5" fill="#555" font-family="Liberation Sans">A</text><path d="M6.5 11.5l4.5-4.5 2 2-4.5 4.5z" fill="#e87a90"/></svg>
<div class="r" style="left:459.4px;top:186.7px;width:15.3px;height:15px;background:#fff;border:1px solid #d6d6d6;box-sizing:border-box"></div>
<svg class="r" style="left:459.4px;top:186.7px;" width="16" height="15" viewBox="0 0 16 15"><text x="3.5" y="8.5" font-size="7.5" fill="#555" font-family="Liberation Sans">A</text><path d="M6.5 11.5l4.5-4.5 2 2-4.5 4.5z" fill="#e87a90"/></svg>
<div class="r" style="left:459.4px;top:230.4px;width:15.3px;height:15px;background:#fff;border:1px solid #d6d6d6;box-sizing:border-box"></div>
<svg class="r" style="left:459.4px;top:230.4px;" width="16" height="15" viewBox="0 0 16 15"><text x="3.5" y="8.5" font-size="7.5" fill="#555" font-family="Liberation Sans">A</text><path d="M6.5 11.5l4.5-4.5 2 2-4.5 4.5z" fill="#e87a90"/></svg>
<div class="r" style="left:459.4px;top:256.2px;width:15.3px;height:15px;background:#fff;border:1px solid #d6d6d6;box-sizing:border-box"></div>
<svg class="r" style="left:459.4px;top:256.2px;" width="16" height="15" viewBox="0 0 16 15"><text x="3.5" y="8.5" font-size="7.5" fill="#555" font-family="Liberation Sans">A</text><path d="M6.5 11.5l4.5-4.5 2 2-4.5 4.5z" fill="#e87a90"/></svg>
<div class="r" style="left:253px;top:227px;width:222px;height:1px;background:#d4d4d4"></div>
<div class="r" style="left:260.4px;top:186px;width:191px;height:20px;background:#fff;border:1px solid #c8c8c8;box-sizing:border-box"></div>
<div class="r" style="left:260.4px;top:230px;width:191px;height:20px;background:#fff;border:1px solid #c8c8c8;box-sizing:border-box"></div>
<div class="r" style="left:260.4px;top:256px;width:191px;height:20px;background:#fff;border:1px solid #c8c8c8;box-sizing:border-box"></div>
<div class="r" style="left:450.5px;top:187px;width:1.5px;height:22px;background:#d0d0d0"></div>
<div class="r" style="left:450.5px;top:251px;width:1.5px;height:28px;background:#d0d0d0"></div>
<div class="r" style="left:305px;top:293.5px;width:16px;height:12px;background:#fff;border:1px solid #d0d0d0;box-sizing:border-box"></div>
<div class="r" style="left:328px;top:293.5px;width:16px;height:12px;background:#fff;border:1px solid #d0d0d0;box-sizing:border-box"></div>
<div class="r" style="left:351px;top:293.5px;width:70.5px;height:14.2px;background:#fff;border:1px solid #d0d0d0;box-sizing:border-box"></div>
<div class="t" style="left:363px;top:296.43px;font-size:7.5px;line-height:9.75px;color:#555;">Wyczyść wszystko</div>
<div class="r" style="left:482px;top:118px;width:1px;height:602px;background:#d0d0d0"></div>
<div class="r" style="left:484px;top:117.5px;width:13px;height:12.5px;background:#fff;border:1px solid #d4d4d4;box-sizing:border-box"></div>
<svg class="r" style="left:487px;top:120px;" width="7" height="7" viewBox="0 0 7 7"><path d="M2 1.5v3.5h3.5" stroke="#555" stroke-width="1.2" fill="none"/></svg>
<div class="r" style="left:515px;top:118.5px;width:508px;height:9.5px;background:#fff"></div>
<div class="r" style="left:515px;top:118.5px;width:54px;height:9.5px;background:#c8c8c8"></div>
<svg class="r" style="left:515px;top:118.5px;" width="508" height="10" viewBox="0 0 508 10"><rect x="3.27" y="4.2" width="0.8" height="0.9" fill="#666"/><rect x="10.46" y="2.5" width="0.8" height="4" fill="#555"/><rect x="17.65" y="4.2" width="0.8" height="0.9" fill="#666"/><text x="25.24" y="7.2" font-size="6.5" fill="#444" text-anchor="middle" font-family="Liberation Sans">1</text><rect x="32.03" y="4.2" width="0.8" height="0.9" fill="#666"/><rect x="39.22" y="2.5" width="0.8" height="4" fill="#555"/><rect x="46.41" y="4.2" width="0.8" height="0.9" fill="#666"/><rect x="60.79" y="4.2" width="0.8" height="0.9" fill="#666"/><rect x="67.98" y="2.5" width="0.8" height="4" fill="#555"/><rect x="75.17" y="4.2" width="0.8" height="0.9" fill="#666"/><text x="82.76" y="7.2" font-size="6.5" fill="#444" text-anchor="middle" font-family="Liberation Sans">1</text><rect x="89.55" y="4.2" width="0.8" height="0.9" fill="#666"/><rect x="96.74" y="2.5" width="0.8" height="4" fill="#555"/><rect x="103.93" y="4.2" width="0.8" height="0.9" fill="#666"/><text x="111.52" y="7.2" font-size="6.5" fill="#444" text-anchor="middle" font-family="Liberation Sans">2</text><rect x="118.31" y="4.2" width="0.8" height="0.9" fill="#666"/><rect x="125.50" y="2.5" width="0.8" height="4" fill="#555"/><rect x="132.69" y="4.2" width="0.8" height="0.9" fill="#666"/><text x="140.28" y="7.2" font-size="6.5" fill="#444" text-anchor="middle" font-family="Liberation Sans">3</text><rect x="147.07" y="4.2" width="0.8" height="0.9" fill="#666"/><rect x="154.26" y="2.5" width="0.8" height="4" fill="#555"/><rect x="161.45" y="4.2" width="0.8" height="0.9" fill="#666"/><text x="169.04" y="7.2" font-size="6.5" fill="#444" text-anchor="middle" font-family="Liberation Sans">4</text><rect x="175.83" y="4.2" width="0.8" height="0.9" fill="#666"/><rect x="183.02" y="2.5" width="0.8" height="4" fill="#555"/><rect x="190.21" y="4.2" width="0.8" height="0.9" fill="#666"/><text x="197.80" y="7.2" font-size="6.5" fill="#444" text-anchor="middle" font-family="Liberation Sans">5</text><rect x="204.59" y="4.2" width="0.8" height="0.9" fill="#666"/><rect x="211.78" y="2.5" width="0.8" height="4" fill="#555"/><rect x="218.97" y="4.2" width="0.8" height="0.9" fill="#666"/><text x="226.56" y="7.2" font-size="6.5" fill="#444" text-anchor="middle" font-family="Liberation Sans">6</text><rect x="233.35" y="4.2" width="0.8" height="0.9" fill="#666"/><rect x="240.54" y="2.5" width="0.8" height="4" fill="#555"/><rect x="247.73" y="4.2" width="0.8" height="0.9" fill="#666"/><text x="255.32" y="7.2" font-size="6.5" fill="#444" text-anchor="middle" font-family="Liberation Sans">7</text><rect x="262.11" y="4.2" width="0.8" height="0.9" fill="#666"/><rect x="269.30" y="2.5" width="0.8" height="4" fill="#555"/><rect x="276.49" y="4.2" width="0.8" height="0.9" fill="#666"/><text x="284.08" y="7.2" font-size="6.5" fill="#444" text-anchor="middle" font-family="Liberation Sans">8</text><rect x="290.87" y="4.2" width="0.8" height="0.9" fill="#666"/><rect x="298.06" y="2.5" width="0.8" height="4" fill="#555"/><rect x="305.25" y="4.2" width="0.8" height="0.9" fill="#666"/><text x="312.84" y="7.2" font-size="6.5" fill="#444" text-anchor="middle" font-family="Liberation Sans">9</text><rect x="319.63" y="4.2" width="0.8" height="0.9" fill="#666"/><rect x="326.82" y="2.5" width="0.8" height="4" fill="#555"/><rect x="334.01" y="4.2" width="0.8" height="0.9" fill="#666"/><text x="341.60" y="7.2" font-size="6.5" fill="#444" text-anchor="middle" font-family="Liberation Sans">10</text><rect x="348.39" y="4.2" width="0.8" height="0.9" fill="#666"/><rect x="355.58" y="2.5" width="0.8" height="4" fill="#555"/><rect x="362.77" y="4.2" width="0.8" height="0.9" fill="#666"/><text x="370.36" y="7.2" font-size="6.5" fill="#444" text-anchor="middle" font-family="Liberation Sans">11</text><rect x="377.15" y="4.2" width="0.8" height="0.9" fill="#666"/><rect x="384.34" y="2.5" width="0.8" height="4" fill="#555"/><rect x="391.53" y="4.2" width="0.8" height="0.9" fill="#666"/><text x="399.12" y="7.2" font-size="6.5" fill="#444" text-anchor="middle" font-family="Liberation Sans">12</text><rect x="405.91" y="4.2" width="0.8" height="0.9" fill="#666"/><rect x="413.10" y="2.5" width="0.8" height="4" fill="#555"/><rect x="420.29" y="4.2" width="0.8" height="0.9" fill="#666"/><text x="427.88" y="7.2" font-size="6.5" fill="#444" text-anchor="middle" font-family="Liberation Sans">13</text><rect x="434.67" y="4.2" width="0.8" height="0.9" fill="#666"/><rect x="441.86" y="2.5" width="0.8" height="4" fill="#555"/><rect x="449.05" y="4.2" width="0.8" height="0.9" fill="#666"/><text x="456.64" y="7.2" font-size="6.5" fill="#444" text-anchor="middle" font-family="Liberation Sans">14</text><rect x="463.43" y="4.2" width="0.8" height="0.9" fill="#666"/><rect x="470.62" y="2.5" width="0.8" height="4" fill="#555"/><rect x="477.81" y="4.2" width="0.8" height="0.9" fill="#666"/><text x="485.40" y="7.2" font-size="6.5" fill="#444" text-anchor="middle" font-family="Liberation Sans">15</text><rect x="492.19" y="4.2" width="0.8" height="0.9" fill="#666"/><rect x="499.38" y="2.5" width="0.8" height="4" fill="#555"/><rect x="506.57" y="4.2" width="0.8" height="0.9" fill="#666"/></svg>
<svg class="r" style="left:565.5px;top:117px;" width="8" height="16" viewBox="0 0 8 16"><path d="M0.5 0.5h7l-3.5 5z" fill="#fff" stroke="#aaa"/><path d="M4 5.5l3.5 5h-7z" fill="#fff" stroke="#aaa"/><rect x="0.5" y="10.5" width="7" height="4.5" fill="#fff" stroke="#aaa"/></svg>
<div class="r" style="left:485px;top:145px;width:10px;height:575px;background:#fff"></div>
<div class="r" style="left:485px;top:145px;width:10px;height:73px;background:#c8c8c8"></div>
<svg class="r" style="left:485px;top:145px;" width="10" height="575" viewBox="0 0 10 575"><rect x="4.5" y="8.19" width="0.9" height="0.8" fill="#666"/><text transform="translate(7,15.78) rotate(-90)" x="0" y="0" font-size="6.5" fill="#444" text-anchor="middle" font-family="Liberation Sans">2</text><rect x="4.5" y="22.57" width="0.9" height="0.8" fill="#666"/><rect x="3" y="29.76" width="4" height="0.8" fill="#555"/><rect x="4.5" y="36.95" width="0.9" height="0.8" fill="#666"/><text transform="translate(7,44.54) rotate(-90)" x="0" y="0" font-size="6.5" fill="#444" text-anchor="middle" font-family="Liberation Sans">1</text><rect x="4.5" y="51.33" width="0.9" height="0.8" fill="#666"/><rect x="3" y="58.52" width="4" height="0.8" fill="#555"/><rect x="4.5" y="65.71" width="0.9" height="0.8" fill="#666"/><rect x="4.5" y="80.09" width="0.9" height="0.8" fill="#666"/><rect x="3" y="87.28" width="4" height="0.8" fill="#555"/><rect x="4.5" y="94.47" width="0.9" height="0.8" fill="#666"/><text transform="translate(7,102.06) rotate(-90)" x="0" y="0" font-size="6.5" fill="#444" text-anchor="middle" font-family="Liberation Sans">1</text><rect x="4.5" y="108.85" width="0.9" height="0.8" fill="#666"/><rect x="3" y="116.04" width="4" height="0.8" fill="#555"/><rect x="4.5" y="123.23" width="0.9" height="0.8" fill="#666"/><text transform="translate(7,130.82) rotate(-90)" x="0" y="0" font-size="6.5" fill="#444" text-anchor="middle" font-family="Liberation Sans">2</text><rect x="4.5" y="137.61" width="0.9" height="0.8" fill="#666"/><rect x="3" y="144.80" width="4" height="0.8" fill="#555"/><rect x="4.5" y="151.99" width="0.9" height="0.8" fill="#666"/><text transform="translate(7,159.58) rotate(-90)" x="0" y="0" font-size="6.5" fill="#444" text-anchor="middle" font-family="Liberation Sans">3</text><rect x="4.5" y="166.37" width="0.9" height="0.8" fill="#666"/><rect x="3" y="173.56" width="4" height="0.8" fill="#555"/><rect x="4.5" y="180.75" width="0.9" height="0.8" fill="#666"/><text transform="translate(7,188.34) rotate(-90)" x="0" y="0" font-size="6.5" fill="#444" text-anchor="middle" font-family="Liberation Sans">4</text><rect x="4.5" y="195.13" width="0.9" height="0.8" fill="#666"/><rect x="3" y="202.32" width="4" height="0.8" fill="#555"/><rect x="4.5" y="209.51" width="0.9" height="0.8" fill="#666"/><text transform="translate(7,217.10) rotate(-90)" x="0" y="0" font-size="6.5" fill="#444" text-anchor="middle" font-family="Liberation Sans">5</text><rect x="4.5" y="223.89" width="0.9" height="0.8" fill="#666"/><rect x="3" y="231.08" width="4" height="0.8" fill="#555"/><rect x="4.5" y="238.27" width="0.9" height="0.8" fill="#666"/><text transform="translate(7,245.86) rotate(-90)" x="0" y="0" font-size="6.5" fill="#444" text-anchor="middle" font-family="Liberation Sans">6</text><rect x="4.5" y="252.65" width="0.9" height="0.8" fill="#666"/><rect x="3" y="259.84" width="4" height="0.8" fill="#555"/><rect x="4.5" y="267.03" width="0.9" height="0.8" fill="#666"/><text transform="translate(7,274.62) rotate(-90)" x="0" y="0" font-size="6.5" fill="#444" text-anchor="middle" font-family="Liberation Sans">7</text><rect x="4.5" y="281.41" width="0.9" height="0.8" fill="#666"/><rect x="3" y="288.60" width="4" height="0.8" fill="#555"/><rect x="4.5" y="295.79" width="0.9" height="0.8" fill="#666"/><text transform="translate(7,303.38) rotate(-90)" x="0" y="0" font-size="6.5" fill="#444" text-anchor="middle" font-family="Liberation Sans">8</text><rect x="4.5" y="310.17" width="0.9" height="0.8" fill="#666"/><rect x="3" y="317.36" width="4" height="0.8" fill="#555"/><rect x="4.5" y="324.55" width="0.9" height="0.8" fill="#666"/><text transform="translate(7,332.14) rotate(-90)" x="0" y="0" font-size="6.5" fill="#444" text-anchor="middle" font-family="Liberation Sans">9</text><rect x="4.5" y="338.93" width="0.9" height="0.8" fill="#666"/><rect x="3" y="346.12" width="4" height="0.8" fill="#555"/><rect x="4.5" y="353.31" width="0.9" height="0.8" fill="#666"/><text transform="translate(7,360.90) rotate(-90)" x="0" y="0" font-size="6.5" fill="#444" text-anchor="middle" font-family="Liberation Sans">10</text><rect x="4.5" y="367.69" width="0.9" height="0.8" fill="#666"/><rect x="3" y="374.88" width="4" height="0.8" fill="#555"/><rect x="4.5" y="382.07" width="0.9" height="0.8" fill="#666"/><text transform="translate(7,389.66) rotate(-90)" x="0" y="0" font-size="6.5" fill="#444" text-anchor="middle" font-family="Liberation Sans">11</text><rect x="4.5" y="396.45" width="0.9" height="0.8" fill="#666"/><rect x="3" y="403.64" width="4" height="0.8" fill="#555"/><rect x="4.5" y="410.83" width="0.9" height="0.8" fill="#666"/><text transform="translate(7,418.42) rotate(-90)" x="0" y="0" font-size="6.5" fill="#444" text-anchor="middle" font-family="Liberation Sans">12</text><rect x="4.5" y="425.21" width="0.9" height="0.8" fill="#666"/><rect x="3" y="432.40" width="4" height="0.8" fill="#555"/><rect x="4.5" y="439.59" width="0.9" height="0.8" fill="#666"/><text transform="translate(7,447.18) rotate(-90)" x="0" y="0" font-size="6.5" fill="#444" text-anchor="middle" font-family="Liberation Sans">13</text><rect x="4.5" y="453.97" width="0.9" height="0.8" fill="#666"/><rect x="3" y="461.16" width="4" height="0.8" fill="#555"/><rect x="4.5" y="468.35" width="0.9" height="0.8" fill="#666"/><text transform="translate(7,475.94) rotate(-90)" x="0" y="0" font-size="6.5" fill="#444" text-anchor="middle" font-family="Liberation Sans">14</text><rect x="4.5" y="482.73" width="0.9" height="0.8" fill="#666"/><rect x="3" y="489.92" width="4" height="0.8" fill="#555"/><rect x="4.5" y="497.11" width="0.9" height="0.8" fill="#666"/><text transform="translate(7,504.70) rotate(-90)" x="0" y="0" font-size="6.5" fill="#444" text-anchor="middle" font-family="Liberation Sans">15</text><rect x="4.5" y="511.49" width="0.9" height="0.8" fill="#666"/><rect x="3" y="518.68" width="4" height="0.8" fill="#555"/><rect x="4.5" y="525.87" width="0.9" height="0.8" fill="#666"/><text transform="translate(7,533.46) rotate(-90)" x="0" y="0" font-size="6.5" fill="#444" text-anchor="middle" font-family="Liberation Sans">16</text><rect x="4.5" y="540.25" width="0.9" height="0.8" fill="#666"/><rect x="3" y="547.44" width="4" height="0.8" fill="#555"/><rect x="4.5" y="554.63" width="0.9" height="0.8" fill="#666"/><text transform="translate(7,562.22) rotate(-90)" x="0" y="0" font-size="6.5" fill="#444" text-anchor="middle" font-family="Liberation Sans">17</text><rect x="4.5" y="569.01" width="0.9" height="0.8" fill="#666"/></svg>
<div class="r" style="left:515px;top:145px;width:508px;height:575px;background:#fff;border-left:1px solid #d0d0d0;border-top:1px solid #d6d6d6;box-sizing:border-box"></div>
<div class="r" style="left:6px;top:720px;width:1017px;height:15px;background:#f3f2f1;border-top:1px solid #dadada;box-sizing:border-box"></div>
<div class="r" style="left:5px;top:735px;width:1018px;height:1px;background:#4a70ae"></div>
<div class="r" style="left:5px;top:736px;width:1018px;height:3px;background:linear-gradient(rgba(0,0,0,0.12),rgba(0,0,0,0))"></div>
<div class="r" style="left:2px;top:6px;width:3px;height:731px;background:linear-gradient(90deg,rgba(0,0,0,0),rgba(0,0,0,0.07))"></div>
<div class="t" style="left:10.8px;top:724.26px;font-size:6.82px;line-height:8.87px;color:#444;">Strona 1 z 1</div>
<div class="t" style="left:72.4px;top:724.19px;font-size:6.94px;line-height:9.02px;color:#444;">Polski</div>
<svg class="r" style="left:857px;top:721px;" width="12" height="12" viewBox="0 0 12 12"><path d="M1 3.5v-2h2M9 1.5h2v2M11 8.5v2h-2M3 10.5h-2v-2" stroke="#444" fill="none"/><path d="M4 2.5h3l2 2v5h-5z" stroke="#444" fill="none"/></svg>
<div class="t" style="left:870px;top:724.23px;font-size:7.03px;line-height:9.14px;color:#444;">Koncentracja uwagi</div>
<svg class="r" style="left:946px;top:722px;" width="11" height="11" viewBox="0 0 11 11"><rect x="0.5" y="1.5" width="4.5" height="8" stroke="#555" fill="none"/><rect x="5.5" y="1.5" width="4.5" height="8" stroke="#555" fill="none"/><path d="M1.5 4h2.5M1.5 6h2.5M6.5 4h2.5M6.5 6h2.5" stroke="#555" stroke-width="0.6"/></svg>
<div class="r" style="left:966px;top:720.5px;width:27px;height:14.5px;background:#c8c6c4"></div>
<svg class="r" style="left:974.5px;top:722px;" width="9" height="11" viewBox="0 0 9 11"><rect x="0.5" y="0.5" width="8" height="10" stroke="#444" fill="none"/><path d="M2 4h5M2 6h5" stroke="#444" stroke-width="0.8"/></svg>
<svg class="r" style="left:1001px;top:722px;" width="12" height="12" viewBox="0 0 12 12"><rect x="0.5" y="0.5" width="9" height="9.5" stroke="#555" fill="none"/><path d="M2 3h6M2 5h3" stroke="#555" stroke-width="0.6"/><circle cx="9" cy="9" r="2.8" fill="#444"/></svg>
<div class="r" style="left:237px;top:184.5px;width:213.5px;height:117px;background:#fff;border:1px solid #c6c6c6;box-sizing:border-box;box-shadow:1px 1px 2px rgba(0,0,0,0.15)"></div>
<div class="r" style="left:238.5px;top:234px;width:211px;height:15.5px;background:#cfdcee;border:1px solid #a9c0e3;box-sizing:border-box"></div>
<div class="t" style="left:260.8px;top:189.32px;font-size:8.9px;line-height:11.57px;color:#333;;transform:scaleX(0.8854);transform-origin:0 50%"><u style="text-decoration-thickness:0.6px;text-underline-offset:1px">W</u>yczyść wszystko</div>
<div class="t" style="left:260.8px;top:205.12px;font-size:8.9px;line-height:11.57px;color:#333;;transform:scaleX(0.8944);transform-origin:0 50%"><u style="text-decoration-thickness:0.6px;text-underline-offset:1px">N</u>owy styl...</div>
<div class="t" style="left:260.8px;top:221.32px;font-size:8.9px;line-height:11.57px;color:#333;;transform:scaleX(0.8989);transform-origin:0 50%"><u style="text-decoration-thickness:0.6px;text-underline-offset:1px">A</u>ktualizuj styl Normalny zgodnie z zaznaczeniem</div>
<div class="t" style="left:260.8px;top:237.12px;font-size:8.9px;line-height:11.57px;color:#222;;transform:scaleX(0.9247);transform-origin:0 50%"><u style="text-decoration-thickness:0.6px;text-underline-offset:1px">M</u>odyfikuj...</div>
<div class="t" style="left:260.8px;top:255.12px;font-size:8.9px;line-height:11.57px;color:#b4b4b4;;transform:scaleX(0.8742);transform-origin:0 50%">Zaznacz wszystkie: aktualnie nie używane</div>
<div class="t" style="left:260.8px;top:271.51px;font-size:8.9px;line-height:11.57px;color:#b4b4b4;;transform:scaleX(0.8775);transform-origin:0 50%">Usuń wszystkie: aktualnie nieużywane</div>
<div class="t" style="left:260.8px;top:287.81px;font-size:8.9px;line-height:11.57px;color:#333;;transform:scaleX(0.9101);transform-origin:0 50%">Wyświetl <u style="text-decoration-thickness:0.6px;text-underline-offset:1px">f</u>ormatowanie...</div>
<div class="r" style="left:260px;top:284.5px;width:189px;height:1px;background:#e0e0e0"></div>
<svg class="r" style="left:242px;top:236px;" width="11" height="11" viewBox="0 0 11 11"><path d="M2 9l1-3 5-5 2 2-5 5z" stroke="#2e7d32" fill="none" stroke-width="0.9"/><path d="M2 9.5h7" stroke="#2e7d32" stroke-width="0.9"/></svg>
<svg class="r" style="left:241px;top:285px;" width="14" height="13" viewBox="0 0 14 13"><text x="0.5" y="10" font-size="10" fill="#2b7cd3" font-family="Liberation Sans">A</text><circle cx="9.5" cy="8.5" r="2" stroke="#333" fill="none" stroke-width="0.8"/><path d="M11 10l1.5 1.5" stroke="#333" stroke-width="0.9"/></svg>
<svg class="r" style="left:0px;top:0px;pointer-events:none" width="1023" height="767" viewBox="0 0 1023 767"><path fill="#ffff00" style="mix-blend-mode:multiply" d="M874.2 103 L884.2 101.9 Q884.6 100.1 886 100.1 L890.6 100.1 Q892 101.9 893 101.9 L900 102.2 L900 116.5 Q899 118.3 897.7 118.6 L895.9 119.2 L895.9 121.8 L889.5 121.2 L883.6 120 L875.4 119.5 L874.2 117.7 Z"/><path fill="#ffff00" style="mix-blend-mode:multiply" d="M872.4 161.8 Q886 159 899 147.5 L917.2 132.2 L918.2 132.4 L917.2 180.5 L913 180.5 L913.4 150 L902 160.5 Q888 172.5 872.4 173.3 Z"/><path fill="#ffff00" style="mix-blend-mode:multiply" d="M936.8 171.5 L943.2 172 L943.6 184.2 L937.5 183.5 Z"/><path fill="#ffff00" style="mix-blend-mode:multiply" d="M35 696 Q35.5 692 40 692 L52 691.8 Q57 692 57 697 L57 710 Q56.5 715 50 715.4 L39 715.5 Q35 715.5 35 711 Z"/><path fill="#ffff00" style="mix-blend-mode:multiply" fill-rule="evenodd" d="M51.7 727.6 L47.6 733.7 L47 737.3 L47 753.7 L45.3 754.3 L45.3 767 L57.6 766 L72.9 764.5 L86.9 763.7 L86.9 751.3 L75.2 752.5 L74.6 731.4 L72.9 727.6 Z M51.2 751.9 Q51.5 748 52.3 745.5 Q54 742 55.8 740.2 Q58 738.8 60.5 738.7 L69.6 739.9 Q69 741.5 68.2 743.1 Q66.5 746 64.6 747.8 Q61 750 57.6 750.8 Z"/><path fill="#ffff00" style="mix-blend-mode:multiply" d="M103 752.4 L107 752.4 L107 763.8 L103 763.8 Z"/><path fill="#ffff00" style="mix-blend-mode:multiply" d="M231.7 244.4 Q231.9 239.5 233.5 238.9 Q235.5 237.2 238.1 237 L292.3 235.7 Q298 234 304.3 231.5 L316.2 230.1 L317.6 247.1 L292.3 250.8 L264.8 253.6 L241.8 255.4 L234.4 254.9 Q231.8 253.5 231.7 250.8 Z"/><path fill="#ffff00" style="mix-blend-mode:multiply" d="M397.1 237.7 Q397.5 234.5 400.2 234.3 L419.5 234.3 Q423.5 234.8 424.6 236.1 Q426 238 426.1 241.2 L426.1 257.5 Q427 259 427.6 259.5 Q429.5 261 430.6 262.6 Q432 265 432.2 267.6 L432.2 284.9 Q432 288 430.6 290 Q428 293.5 424.6 295.1 Q418 297.8 410.3 299.1 L396.1 301.2 L396.1 289 L410.3 285.9 Q417 284 421.5 281.9 Q425.5 279 426.6 275.8 Q426.2 273 424.6 271.7 Q422 270.3 418.5 270.2 L405.2 270.2 L405.2 258.5 L418.5 249.3 Q415.5 246 412.4 245.8 Q408 245.6 405.2 246.3 Q402.2 247.5 401.2 249.3 L400.2 251.4 L397.1 251.4 Z"/><path fill="#ffff00" style="mix-blend-mode:multiply" d="M437.6 286 L452 286 L452 301.4 L437.6 301.4 Z"/></svg>
</body></html>
